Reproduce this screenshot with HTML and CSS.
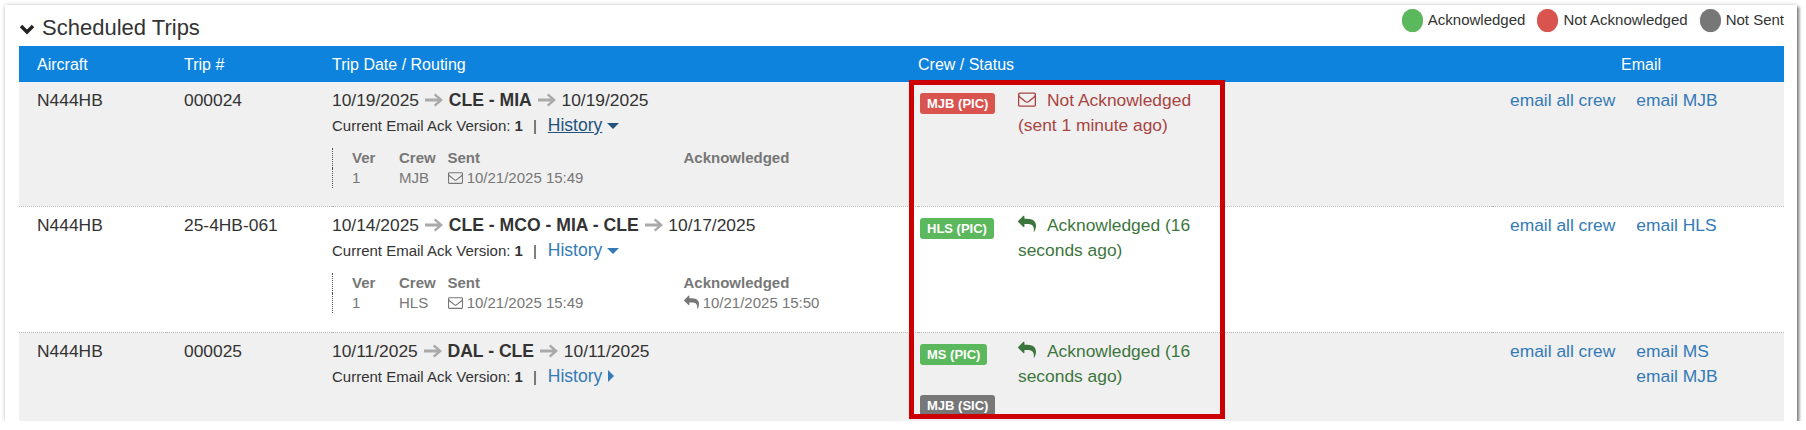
FILE: index.html
```html
<!DOCTYPE html>
<html lang="en">
<head>
    <meta charset="UTF-8">
    <title>Scheduled Trips</title>
    <link rel="stylesheet" href="styles.css">
</head>
<body>
    <svg class="icon-defs" width="0" height="0">
        <symbol id="i-reply" viewBox="0 0 1792 1792"><path d="M1792 1120q0 166-127 451-3 7-10.5 24t-13.5 30-13 22q-12 17-28 17-15 0-23.5-10t-8.5-25q0-9 2.5-26.5t2.5-23.5q5-68 5-123 0-101-17.5-181t-48.5-138.5-80-101-105.5-69.5-133-42.5-154-21.5-175.5-6h-224v256q0 26-19 45t-45 19-45-19l-512-512q-19-19-19-45t19-45l512-512q19-19 45-19t45 19 19 45v256h224q713 0 875 403 53 134 53 333z"/></symbol>
        <symbol id="i-envelope" viewBox="0 0 1792 1792"><path d="M1664 1504v-768q-32 36-69 66-268 206-426 338-51 43-83 67t-86.5 48.5-102.5 24.5h-2q-48 0-102.5-24.5t-86.5-48.5-83-67q-158-132-426-338-37-30-69-66v768q0 13 9.5 22.5t22.5 9.5h1472q13 0 22.5-9.5t9.5-22.5zm0-1051v-24.5l-.5-13-3-12.5-5.5-9-9-7.5-14-2.5h-1472q-13 0-22.5 9.5t-9.5 22.5q0 168 147 284 193 152 401 317 6 5 35 29.5t46 37.5 44.5 31.5 50.5 27.5 43 9h2q20 0 43-9t50.5-27.5 44.5-31.5 46-37.5 35-29.5q208-165 401-317 54-43 100.5-115.5t46.5-131.5zm128-37v1088q0 66-47 113t-113 47h-1472q-66 0-113-47t-47-113v-1088q0-66 47-113t113-47h1472q66 0 113 47t47 113z"/></symbol>
        <symbol id="i-arrow" viewBox="0 0 18 14"><path d="M10.5 0.5L18 7l-7.500 6.500-1.700-1.800 3.800-3.300H0V5.600h12.600L8.800 2.300z"/></symbol>
    </svg>

    <div class="card">
        <div class="title-row">
            <h2 class="title">
                <svg class="chevron" viewBox="0 0 16 12"><path d="M2 3l6 6 6-6" /></svg>
                Scheduled Trips
            </h2>
            <div class="legend">
                <span class="dot dot-green"></span><span class="legend-label">Acknowledged</span>
                <span class="dot dot-red"></span><span class="legend-label">Not Acknowledged</span>
                <span class="dot dot-grey"></span><span class="legend-label">Not Sent</span>
            </div>
        </div>

        <table class="trips">
            <colgroup>
                <col class="col-aircraft">
                <col class="col-trip">
                <col class="col-routing">
                <col class="col-crew">
                <col class="col-email">
            </colgroup>
            <thead>
                <tr>
                    <th>Aircraft</th>
                    <th>Trip #</th>
                    <th>Trip Date / Routing</th>
                    <th>Crew / Status</th>
                    <th class="center">Email</th>
                </tr>
            </thead>
            <tbody>
                <tr class="row-one stripe">
                    <td>N444HB</td>
                    <td>000024</td>
                    <td>
                        <div class="route">10/19/2025 <svg class="arrow"><use href="#i-arrow"/></svg> <b>CLE - MIA</b> <svg class="arrow"><use href="#i-arrow"/></svg> 10/19/2025</div>
                        <div class="ack-line">Current Email Ack Version: <b>1</b><span class="sep">|</span><a class="history hover" href="#">History</a><span class="caret-down dark"></span></div>
                        <table class="versions">
                            <tr><th class="v-ver">Ver</th><th class="v-crew">Crew</th><th class="v-sent">Sent</th><th>Acknowledged</th></tr>
                            <tr><td>1</td><td>MJB</td><td><svg class="small-icon"><use href="#i-envelope"/></svg> 10/21/2025 15:49</td><td></td></tr>
                        </table>
                    </td>
                    <td>
                        <div class="crew">
                            <div class="badges"><span class="badge badge-red">MJB (PIC)</span></div>
                            <div class="status status-red"><svg class="status-icon"><use href="#i-envelope"/></svg>Not Acknowledged (sent 1 minute ago)</div>
                        </div>
                    </td>
                    <td><div class="emails"><a href="#">email all crew</a><div class="email-list"><a href="#">email MJB</a></div></div></td>
                </tr>
                <tr class="row-two">
                    <td>N444HB</td>
                    <td>25-4HB-061</td>
                    <td>
                        <div class="route">10/14/2025 <svg class="arrow"><use href="#i-arrow"/></svg> <b>CLE - MCO - MIA - CLE</b> <svg class="arrow"><use href="#i-arrow"/></svg> 10/17/2025</div>
                        <div class="ack-line">Current Email Ack Version: <b>1</b><span class="sep">|</span><a class="history" href="#">History</a><span class="caret-down"></span></div>
                        <table class="versions">
                            <tr><th class="v-ver">Ver</th><th class="v-crew">Crew</th><th class="v-sent">Sent</th><th>Acknowledged</th></tr>
                            <tr><td>1</td><td>HLS</td><td><svg class="small-icon"><use href="#i-envelope"/></svg> 10/21/2025 15:49</td><td><svg class="small-icon"><use href="#i-reply"/></svg> 10/21/2025 15:50</td></tr>
                        </table>
                    </td>
                    <td>
                        <div class="crew">
                            <div class="badges"><span class="badge badge-green">HLS (PIC)</span></div>
                            <div class="status status-green"><svg class="status-icon"><use href="#i-reply"/></svg>Acknowledged (16 seconds ago)</div>
                        </div>
                    </td>
                    <td><div class="emails"><a href="#">email all crew</a><div class="email-list"><a href="#">email HLS</a></div></div></td>
                </tr>
                <tr class="row-three stripe">
                    <td>N444HB</td>
                    <td>000025</td>
                    <td>
                        <div class="route">10/11/2025 <svg class="arrow"><use href="#i-arrow"/></svg> <b>DAL - CLE</b> <svg class="arrow"><use href="#i-arrow"/></svg> 10/11/2025</div>
                        <div class="ack-line">Current Email Ack Version: <b>1</b><span class="sep">|</span><a class="history" href="#">History</a><span class="caret-right"></span></div>
                    </td>
                    <td>
                        <div class="crew">
                            <div class="badges"><span class="badge badge-green">MS (PIC)</span></div>
                            <div class="status status-green"><svg class="status-icon"><use href="#i-reply"/></svg>Acknowledged (16 seconds ago)</div>
                        </div>
                        <div class="crew crew-second">
                            <div class="badges"><span class="badge badge-grey">MJB (SIC)</span></div>
                        </div>
                    </td>
                    <td><div class="emails"><a href="#">email all crew</a><div class="email-list"><a href="#">email MS</a><a href="#">email MJB</a></div></div></td>
                </tr>
            </tbody>
        </table>

        <div class="callout"></div>
    </div>
</body>
</html>
```

FILE: styles.css
```css
body{
    margin: 0;
    padding: 5px 9px 0 5px;
    background-color: #fff;
    color: #333;
    font-family: "Liberation Sans", Arial, sans-serif;
    font-size: 17.4px;
    line-height: 25px;
}

a{
    color: #337ab7;
    text-decoration: none;
}

.icon-defs{
    position: absolute;
}

.card{
    position: relative;
    height: 416px;
    padding: 0 13px 0 14px;
    background-color: #fff;
    box-shadow: 2px 2px 3px #777, 0 0 4px #ccc;
    overflow: hidden;
}

.title-row{
    display: flex;
    justify-content: space-between;
    height: 41px;
}

.title{
    margin: 9px 0 0;
    font-size: 22px;
    font-weight: normal;
    line-height: 28px;
}

.chevron{
    width: 16px;
    height: 12px;
    margin-right: 1px;
    fill: none;
    stroke: #222;
    stroke-width: 3.4;
}

.legend{
    display: flex;
    align-items: flex-start;
    font-size: 15px;
    line-height: 20px;
    padding-top: 4px;
}

.legend-label{
    margin-right: 12px;
    padding-top: 1px;
}

.legend-label:last-child{
    margin-right: 0;
}

.dot{
    width: 21px;
    height: 23px;
    margin-right: 5px;
    border-radius: 50%;
    box-shadow: 0 0 1px #bbb;
}

.dot-green{ background-color: #5cb85c; }
.dot-red{ background-color: #d9534f; }
.dot-grey{ background-color: #777; }

.trips{
    width: 100%;
    table-layout: fixed;
    border-collapse: collapse;
}

.col-aircraft{ width: 147px; }
.col-trip{ width: 166px; }
.col-routing{ width: 586px; }
.col-crew{ width: 574px; }

.trips > thead th{
    height: 36px;
    padding: 0 18px;
    background-color: #0d83dd;
    color: #fff;
    font-size: 16px;
    font-weight: normal;
    text-align: left;
}

.trips > thead th:nth-child(3),
.trips > tbody > tr > td:nth-child(3),
.trips > thead th:nth-child(4),
.trips > tbody > tr > td:nth-child(4){
    padding-left: 0;
}

.trips > thead th:nth-child(2),
.trips > tbody > tr > td:nth-child(2){
    padding-left: 18px;
}

.trips > thead th.center{
    padding-left: 6px;
    padding-right: 0;
    text-align: center;
}

.trips > tbody > tr > td{
    padding: 6px 0 0 18px;
    vertical-align: top;
    border-bottom: 1px dotted #bbb;
}

.stripe{
    background-color: #f0f0f0;
}

.row-one{ height: 124px; }
.row-two{ height: 126px; }
.row-three{ height: 89px; }

.route b{
    font-size: 17.6px;
}

.arrow{
    width: 18px;
    height: 14px;
    margin: 0 1px;
    fill: #aaa;
    vertical-align: -1px;
}

.ack-line{
    font-size: 15px;
}

.sep{
    margin: 0 11px 0 10px;
}

.history{
    font-size: 17.5px;
}

.history.hover{
    color: #23527c;
    text-decoration: underline;
}

.caret-down{
    display: inline-block;
    margin-left: 5px;
    vertical-align: 2px;
    border-top: 6px solid #337ab7;
    border-left: 6px solid transparent;
    border-right: 6px solid transparent;
}

.caret-down.dark{
    border-top-color: #23527c;
}

.caret-right{
    display: inline-block;
    margin-left: 6px;
    vertical-align: 0;
    border-left: 6px solid #337ab7;
    border-top: 6px solid transparent;
    border-bottom: 6px solid transparent;
}

.versions{
    margin-top: 10px;
    border-collapse: collapse;
    border-left: 1px dotted #555;
    color: #777;
    font-size: 15px;
    line-height: 20px;
}

.versions th,
.versions td{
    padding: 0;
    text-align: left;
}

.versions th{
    font-weight: bold;
}

.versions tr > :first-child{
    padding-left: 19px;
}

.v-ver{ width: 47px; }
.v-crew{ width: 48px; }
.v-sent{ width: 236px; }

.small-icon{
    width: 15px;
    height: 15px;
    fill: #777;
    vertical-align: -2px;
}

.crew{
    display: flex;
    padding-left: 2px;
}

.badges{
    width: 98px;
    padding-top: 2px;
}

.badge{
    display: inline-block;
    padding: 0 7px;
    border-radius: 3px;
    color: #fff;
    font-size: 13px;
    font-weight: bold;
    line-height: 21px;
}

.badge-red{ background-color: #d9534f; }
.badge-green{ background-color: #5cb85c; }
.badge-grey{ background-color: #777; }

.status{
    width: 176px;
}

.status-red{ color: #a94442; }
.status-green{ color: #3c763d; }

.status-icon{
    width: 18px;
    height: 18px;
    margin-right: 11px;
    fill: currentColor;
    vertical-align: -2px;
}

.crew-second{
    margin-top: 3px;
}

.crew-second .badges{
    padding-top: 0;
}

.emails{
    display: flex;
    gap: 21px;
}

.email-list{
    display: flex;
    flex-direction: column;
}

/* red annotation drawn over the crew column */
.callout{
    position: absolute;
    left: 904px;
    top: 75px;
    width: 306px;
    height: 329px;
    border: 5px solid #c00;
}
```
